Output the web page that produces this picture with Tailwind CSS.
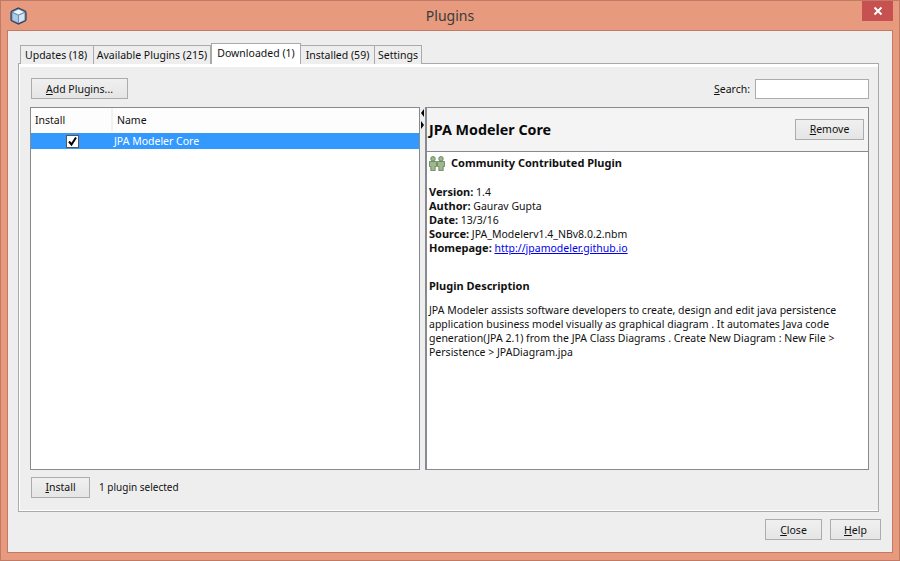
<!DOCTYPE html>
<html lang="en">
<head>
<meta charset="UTF-8">
<title>Plugins</title>
<script src="https://cdn.jsdelivr.net/npm/@tailwindcss/browser@4"></script>
</head>
<body class="m-0 overflow-hidden bg-white">
<div class="w-[900px] h-[561px] flex flex-col bg-[#e79a7e] border border-[#c07a66] font-['Noto_Sans',sans-serif] text-[10.5px] leading-[14px] text-[#111]">
  <!-- title bar -->
  <div class="h-[29px] shrink-0 flex items-start relative">
    <svg class="absolute left-[9px] top-[6px]" width="17" height="18" viewBox="0 0 17 18">
      <path d="M8.5 1 L15 4 Q16 4.5 16 6 V12.5 Q16 13.5 15 14 L8.5 17 L2 14 Q1 13.5 1 12.5 V6 Q1 4.5 2 4 Z" fill="#6f8fae" stroke="#2f4058" stroke-width="1.2"/>
      <path d="M8.5 2.5 L14 5 L8.5 7.5 L3 5 Z" fill="#eef6fc"/>
      <path d="M2.5 6 L8 8.5 V15.5 L2.5 13 Z" fill="#a9cbe6"/>
      <path d="M9 8.5 L14.5 6 V13 L9 15.5 Z" fill="#d4e6f4"/>
    </svg>
    <div class="flex-1 text-center text-[14px] leading-[29px] text-[#3a3a3a] pl-[37px]">Plugins</div>
    <div class="w-[31px] h-[20px] mr-[6px] bg-[#c75050] flex items-center justify-center">
      <svg width="10" height="10" viewBox="0 0 10 10"><path d="M1.5 1.5 L8.5 8.5 M8.5 1.5 L1.5 8.5" stroke="#fff" stroke-width="2"/></svg>
    </div>
  </div>
  <!-- dialog content -->
  <div class="w-[886px] h-[523px] ml-[6px] bg-[#eeeeee] border border-[#c07a66] px-[10px] pt-[12px] flex flex-col">
    <!-- tabs -->
    <div class="h-[21px] flex items-end pl-[2px] relative z-10 -mb-px">
      <div class="w-[74px] h-[19px] border border-[#aaa] border-b-0 bg-[#eee] pl-[4px] leading-[18px]">Updates (18)</div>
      <div class="w-[117px] h-[19px] border border-[#aaa] border-b-0 border-l-0 bg-[#eee] text-center leading-[18px]">Available Plugins (215)</div>
      <div class="w-[90px] h-[21px] border border-[#aaa] border-b-0 bg-white text-center leading-[18px]">Downloaded (1)</div>
      <div class="w-[74px] h-[19px] border border-[#aaa] border-b-0 border-l-0 bg-[#eee] text-center leading-[18px]">Installed (59)</div>
      <div class="w-[47px] h-[19px] border border-[#aaa] border-b-0 border-l-0 bg-[#eee] text-center leading-[18px]">Settings</div>
    </div>
    <!-- tab panel -->
    <div class="w-[861px] h-[449px] border border-[#aaa] bg-[#eee] flex flex-col">
      <div class="flex-1 border-t-[3px] border-l border-b border-white pl-[11px] pr-[9px] pt-[11px] flex flex-col">
        <div class="h-[21px] flex items-center">
          <button class="w-[97px] h-[21px] border border-[#acacac] bg-gradient-to-b from-[#f0f0f0] to-[#e5e5e5] text-center"><span class="underline">A</span>dd Plugins...</button>
          <div class="ml-auto mr-[5px]"><span class="underline">S</span>earch:</div>
          <div class="w-[114px] h-[20px] border border-[#acacac] bg-white"></div>
        </div>
        <div class="h-[363px] mt-[8px] flex relative -ml-px">
          <!-- plugin table -->
          <div class="w-[390px] border border-[#868a91] bg-white">
            <div class="h-[24px] flex bg-[#fdfdfd] leading-[24px]">
              <div class="w-[82px] pl-[4px] border-r-2 border-[#f2f2f2]">Install</div>
              <div class="flex-1 pl-[4px]">Name</div>
            </div>
            <div class="h-[16px] mt-[1px] bg-[#3399ff] flex items-center text-white">
              <div class="w-[82px] flex justify-center">
                <div class="w-[13px] h-[13px] bg-white border border-[#555] flex items-center justify-center">
                  <svg width="11" height="11" viewBox="0 0 11 11"><path d="M2 5.5 L4.5 8.5 L9 1.5" fill="none" stroke="#000" stroke-width="2"/></svg>
                </div>
              </div>
              <div class="pl-[1px]">JPA Modeler Core</div>
            </div>
          </div>
          <!-- splitter -->
          <div class="w-[5px] relative">
            <div class="absolute left-[1px] top-[2px] w-0 h-0 border-y-[4px] border-y-transparent border-r-[3px] border-r-black"></div>
            <div class="absolute left-[1px] top-[14px] w-0 h-0 border-y-[4px] border-y-transparent border-l-[3px] border-l-black"></div>
          </div>
          <!-- details -->
          <div class="w-[444px] border-l-2 border-t border-r border-b border-[#868a91] bg-white flex flex-col">
            <div class="h-[44px] shrink-0 bg-[#f4f4f4] border-b border-[#868a91] flex items-center pl-[2px] pr-[4px]">
              <div class="text-[14.3px] font-bold text-[#0a0a0a]">JPA Modeler Core</div>
              <button class="ml-auto w-[69px] h-[21px] mb-[1px] border border-[#acacac] bg-gradient-to-b from-[#f0f0f0] to-[#e5e5e5] text-center"><span class="underline">R</span>emove</button>
            </div>
            <div class="pl-[2px] pr-[18px]">
              <div class="h-[22px] flex items-center font-bold text-[11px]">
                <svg width="16" height="15" viewBox="0 0 16 15" class="mr-[6px]">
                  <g fill="#9db88a" stroke="#4f6f43" stroke-width="0.7">
                    <circle cx="4" cy="2.8" r="2.3"/><circle cx="12" cy="2.8" r="2.3"/>
                    <path d="M0.5 5.5 H7.5 V10.5 H6.2 V14.6 H1.8 V10.5 H0.5 Z"/><path d="M8.5 5.5 H15.5 V10.5 H14.2 V14.6 H9.8 V10.5 H8.5 Z"/>
                  </g>
                </svg>
                Community Contributed Plugin
              </div>
              <div class="mt-[11px]"><b class="text-[11px]">Version:</b> 1.4</div>
              <div><b class="text-[11px]">Author:</b> Gaurav Gupta</div>
              <div><b class="text-[11px]">Date:</b> 13/3/16</div>
              <div><b class="text-[11px]">Source:</b> JPA_Modelerv1.4_NBv8.0.2.nbm</div>
              <div><b class="text-[11px]">Homepage:</b> <a class="text-[#0000ee] underline">http://jpamodeler.github.io</a></div>
              <div class="mt-[24px] font-bold text-[11px]">Plugin Description</div>
              <p class="mt-[10px]">JPA Modeler assists software developers to create, design and edit java persistence application business model visually as graphical diagram . It automates Java code generation(JPA 2.1) from the JPA Class Diagrams . Create New Diagram : New File &gt; Persistence &gt; JPADiagram.jpa</p>
            </div>
          </div>
        </div>
        <div class="h-[21px] mt-[7px] flex items-center">
          <button class="w-[59px] h-[21px] pb-[2px] border border-[#acacac] bg-gradient-to-b from-[#f0f0f0] to-[#e5e5e5] text-center"><span class="underline">I</span>nstall</button>
          <div class="ml-[9px] pb-[2px] text-[10px]">1 plugin selected</div>
        </div>
      </div>
    </div>
    <!-- dialog buttons -->
    <div class="flex justify-end gap-[8px] mt-[7px] mr-[1px]">
      <button class="w-[57px] h-[21px] border border-[#acacac] bg-gradient-to-b from-[#f0f0f0] to-[#e5e5e5] text-center"><span class="underline">C</span>lose</button>
      <button class="w-[51px] h-[21px] border border-[#acacac] bg-gradient-to-b from-[#f0f0f0] to-[#e5e5e5] text-center"><span class="underline">H</span>elp</button>
    </div>
  </div>
</div>
</body>
</html>
